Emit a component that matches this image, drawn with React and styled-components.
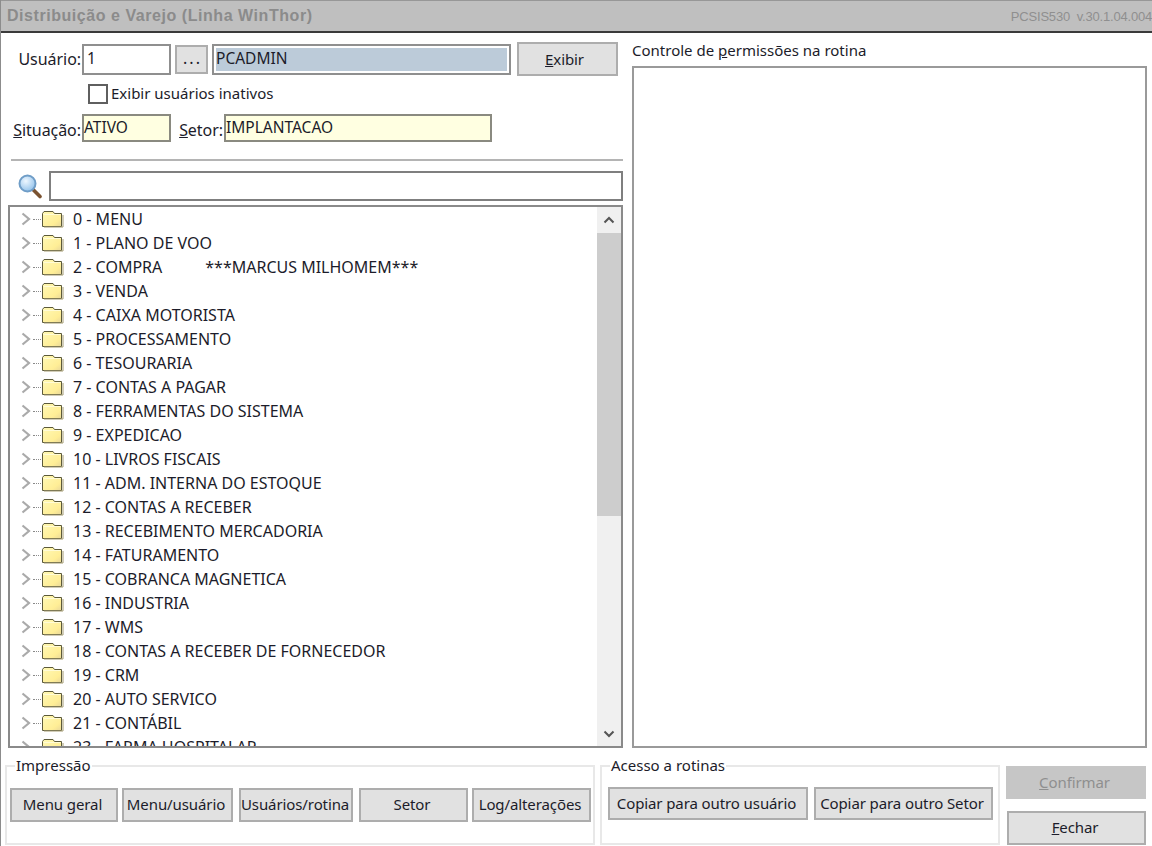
import React from "react";
import styled, { createGlobalStyle } from "styled-components";

const GlobalStyle = createGlobalStyle`
  html, body {
    margin: 0;
    padding: 0;
    background: #ffffff;
  }
  * {
    box-sizing: border-box;
  }
`;

const FONT = `"Noto Sans", "Liberation Sans", sans-serif`;
const INK = "#1c1c2a";

const Window = styled.div`
  width: 1152px;
  height: 846px;
  overflow: hidden;
  background: #ffffff;
  border-left: 1px solid #8c8c8c;
  font-family: ${FONT};
  font-size: 15px;
  color: ${INK};
  display: flex;
  flex-direction: column;
`;

const TitleBar = styled.header`
  height: 33px;
  flex: none;
  margin-left: -1px;
  padding: 0 0 0 7px;
  display: flex;
  align-items: center;
  justify-content: space-between;
  background: #bfbfbf;
  border-top: 1px solid #979797;
  border-bottom: 2px solid #3a3a3a;
  font-family: "Liberation Sans", Arial, sans-serif;
  white-space: nowrap;
`;

const AppName = styled.span`
  font-size: 16px;
  font-weight: bold;
  letter-spacing: 0.55px;
  color: #8b8b8b;
`;

const Version = styled.span`
  font-size: 13px;
  letter-spacing: -0.2px;
  color: #8f8f8f;
`;

const Body = styled.main`
  height: 715px;
  flex: none;
  padding-left: 7px;
  display: grid;
  grid-template-columns: 615px 515px;
  column-gap: 9px;
`;

const LeftColumn = styled.section`
  display: flex;
  flex-direction: column;
  min-height: 0;
`;

const RightColumn = styled.section`
  display: flex;
  flex-direction: column;
  min-height: 0;
`;

const FormRow = styled.div`
  display: flex;
  align-items: center;
  height: ${(p) => p.$h}px;
  margin-top: ${(p) => p.$top}px;
`;

const FieldLabel = styled.label`
  width: ${(p) => p.$w}px;
  flex: none;
  padding: ${(p) => p.$drop || 0}px 1px 0 0;
  font-size: 16px;
  text-align: right;
  white-space: nowrap;
  letter-spacing: -0.05px;
`;

const Field = styled.div`
  width: ${(p) => p.$w}px;
  height: ${(p) => p.$h}px;
  margin-left: ${(p) => p.$left || 0}px;
  flex: none;
  padding: 0 0 3px ${(p) => (p.$readonly ? 0 : 3)}px;
  display: flex;
  align-items: center;
  border: 2px solid;
  border-color: ${(p) => (p.$readonly ? "#8a8a80" : "#8f8f8f")};
  background: ${(p) => (p.$readonly ? "#ffffe1" : "#ffffff")};
  font-size: 15.5px;
  white-space: nowrap;
`;

const SelectedField = styled(Field)`
  padding: 2px;
`;

const Selection = styled.span`
  flex: 1;
  height: 100%;
  display: flex;
  align-items: center;
  padding-bottom: 3px;
  background: #bccbd9;
`;

const Button = styled.button`
  width: ${(p) => p.$w}px;
  height: ${(p) => p.$h || 34}px;
  margin-left: ${(p) => p.$left || 0}px;
  flex: none;
  padding: 0 3px 2px 0;
  font-family: ${FONT};
  font-size: 15px;
  letter-spacing: -0.1px;
  white-space: nowrap;
  color: ${(p) => (p.disabled ? "#8f8f8f" : INK)};
  background: ${(p) => (p.disabled ? "#c6c6c6" : "#e1e1e1")};
  border: 2px solid ${(p) => (p.disabled ? "#c6c6c6" : "#adadad")};
`;

const BrowseButton = styled(Button)`
  padding: 0 0 4px 2px;
  font-size: 16px;
  letter-spacing: 2px;
`;

const ShowButton = styled(Button)`
  padding: 0 6px 0 0;
`;

const CheckRow = styled(FormRow)`
  padding-left: 80px;
`;

const CheckBox = styled.span`
  width: 20px;
  height: 20px;
  flex: none;
  border: 2px solid #5f5f5f;
  background: #ffffff;
`;

const CheckLabel = styled.span`
  margin-left: 3px;
  padding-bottom: 2px;
`;

const Divider = styled.hr`
  height: 2px;
  margin: 17px 0 0 3px;
  border: 0;
  background: #b4b4b4;
`;

const SearchRow = styled.div`
  display: flex;
  align-items: center;
  height: 30px;
  margin-top: 10px;
  padding-left: 9px;
`;

const SearchInput = styled.div`
  flex: 1;
  height: 30px;
  margin-left: 6px;
  border: 2px solid #7f7f7f;
  background: #ffffff;
`;

const TreeBox = styled.div`
  flex: 1;
  min-height: 0;
  margin-top: 4px;
  display: flex;
  border: 2px solid #8a8a8a;
  background: #ffffff;
`;

const TreeList = styled.ul`
  flex: 1;
  min-width: 0;
  margin: 0;
  padding: 0;
  list-style: none;
  overflow: hidden;
`;

const TreeRow = styled.li`
  height: 24px;
  display: flex;
  align-items: center;
  padding-left: 11px;
  white-space: nowrap;
`;

const Connector = styled.span`
  width: 8px;
  height: 0;
  margin: 0 0 0 2px;
  border-top: 1px dotted #8a8a8a;
`;

const RowText = styled.span`
  margin-left: 9px;
  font-size: 16px;
`;

const NodeNote = styled.span`
  margin-left: 43px;
`;

const ScrollBar = styled.div`
  width: 24px;
  flex: none;
  display: flex;
  flex-direction: column;
  background: #f0f0f0;
`;

const ScrollArrow = styled.div`
  height: ${(p) => p.$h}px;
  flex: none;
  display: flex;
  align-items: center;
  justify-content: center;
`;

const ScrollThumb = styled.div`
  height: 283px;
  flex: none;
  background: #cdcdcd;
`;

const ScrollTrack = styled.div`
  flex: 1;
`;

const PermissionLabel = styled.label`
  height: 33px;
  flex: none;
  display: flex;
  align-items: center;
  white-space: nowrap;
`;

const PermissionBox = styled.div`
  flex: 1;
  border: 2px solid #9a9a9a;
  background: #ffffff;
`;

const Footer = styled.footer`
  flex: 1;
  display: flex;
  padding: 17px 0 0 4px;
`;

const Group = styled.fieldset`
  position: relative;
  width: ${(p) => p.$w}px;
  height: 80px;
  margin: 0 0 0 ${(p) => p.$left || 0}px;
  padding: ${(p) => p.$pad};
  flex: none;
  display: flex;
  align-items: flex-start;
  border: 2px solid #e8e8e8;
  min-width: 0;
`;

const GroupTitle = styled.span`
  position: absolute;
  top: -12px;
  left: ${(p) => p.$left}px;
  padding: 0 1px;
  background: #ffffff;
`;

const SideButtons = styled.div`
  margin-left: 6px;
  margin-top: 1px;
  display: flex;
  flex-direction: column;
  align-items: flex-end;
  width: 140px;
  row-gap: 12px;
`;

const Folder = () => (
  <svg width="23" height="18" viewBox="0 0 23 18">
    <defs>
      <linearGradient id="folderFill" x1="0" y1="0" x2="1" y2="1">
        <stop offset="0" stopColor="#fff9b5" />
        <stop offset="0.7" stopColor="#ffee96" />
        <stop offset="1" stopColor="#e8d79a" />
      </linearGradient>
    </defs>
    <path
      d="M1.5 16.5V3.5L3 1.5h9L13.5 3.5h7v13z"
      fill="url(#folderFill)"
      stroke="#5c5a3a"
      strokeWidth="1"
    />
    <path d="M2.5 4.5h17" stroke="#fffbd6" strokeWidth="1" />
    <path d="M22 5v12H3" fill="none" stroke="#a59c73" strokeWidth="1" />
  </svg>
);

const Expander = () => (
  <svg width="10" height="14" viewBox="0 0 10 14">
    <path d="M1.5 1.5 8 7l-6.5 5.5" fill="none" stroke="#aaaaaa" strokeWidth="2.2" />
  </svg>
);

const Magnifier = () => (
  <svg width="26" height="26" viewBox="0 0 26 26">
    <defs>
      <radialGradient id="lens" cx="0.4" cy="0.35" r="0.7">
        <stop offset="0" stopColor="#eef7ff" />
        <stop offset="1" stopColor="#8fc0ea" />
      </radialGradient>
    </defs>
    <path d="M15.5 16 23 23.5" stroke="#7a5230" strokeWidth="3.6" strokeLinecap="round" />
    <circle cx="10.5" cy="10.5" r="8" fill="url(#lens)" stroke="#6f9dc7" strokeWidth="2" />
  </svg>
);

const Chevron = ({ up }) => (
  <svg width="12" height="8" viewBox="0 0 12 8">
    <path
      d={up ? "M1.5 6.5 6 2l4.5 4.5" : "M1.5 1.5 6 6l4.5-4.5"}
      fill="none"
      stroke="#555555"
      strokeWidth="2"
    />
  </svg>
);

const menus = [
  "0 - MENU",
  "1 - PLANO DE VOO",
  "2 - COMPRA",
  "3 - VENDA",
  "4 - CAIXA MOTORISTA",
  "5 - PROCESSAMENTO",
  "6 - TESOURARIA",
  "7 - CONTAS A PAGAR",
  "8 - FERRAMENTAS DO SISTEMA",
  "9 - EXPEDICAO",
  "10 - LIVROS FISCAIS",
  "11 - ADM. INTERNA DO ESTOQUE",
  "12 - CONTAS A RECEBER",
  "13 - RECEBIMENTO MERCADORIA",
  "14 - FATURAMENTO",
  "15 - COBRANCA MAGNETICA",
  "16 - INDUSTRIA",
  "17 - WMS",
  "18 - CONTAS A RECEBER DE FORNECEDOR",
  "19 - CRM",
  "20 - AUTO SERVICO",
  "21 - CONTÁBIL",
  "23 - FARMA HOSPITALAR",
];

const App = () => {
  return (
    <>
      <GlobalStyle />
      <Window>
        <TitleBar>
          <AppName>Distribuição e Varejo (Linha WinThor)</AppName>
          <Version>PCSIS530&nbsp; v.30.1.04.004</Version>
        </TitleBar>

        <Body>
          <LeftColumn>
            <FormRow $h={34} $top={9}>
              <FieldLabel $w={74}>Usuário:</FieldLabel>
              <Field $w={89} $h={31}>1</Field>
              <BrowseButton $w={33} $h={29} $left={4}>...</BrowseButton>
              <SelectedField $w={299} $h={31} $left={4}>
                <Selection>PCADMIN</Selection>
              </SelectedField>
              <ShowButton $w={101} $left={6}>
                <u>E</u>xibir
              </ShowButton>
            </FormRow>

            <CheckRow $h={20} $top={8}>
              <CheckBox />
              <CheckLabel>Exibir usuários inativos</CheckLabel>
            </CheckRow>

            <FormRow $h={28} $top={10}>
              <FieldLabel $w={74} $drop={3}>
                <u>S</u>ituação:
              </FieldLabel>
              <Field $w={89} $h={28} $readonly>ATIVO</Field>
              <FieldLabel $w={53} $drop={3}>
                <u>S</u>etor:
              </FieldLabel>
              <Field $w={268} $h={28} $readonly>IMPLANTACAO</Field>
            </FormRow>

            <Divider />

            <SearchRow>
              <Magnifier />
              <SearchInput />
            </SearchRow>

            <TreeBox>
              <TreeList>
                {menus.map((menu) => (
                  <TreeRow key={menu}>
                    <Expander />
                    <Connector />
                    <Folder />
                    <RowText>
                      {menu}
                      {menu === "2 - COMPRA" && (
                        <NodeNote>***MARCUS MILHOMEM***</NodeNote>
                      )}
                    </RowText>
                  </TreeRow>
                ))}
              </TreeList>
              <ScrollBar>
                <ScrollArrow $h={26}>
                  <Chevron up />
                </ScrollArrow>
                <ScrollThumb />
                <ScrollTrack />
                <ScrollArrow $h={25}>
                  <Chevron />
                </ScrollArrow>
              </ScrollBar>
            </TreeBox>
          </LeftColumn>

          <RightColumn>
            <PermissionLabel>
              <span>
                Controle de <u>p</u>ermissões na rotina
              </span>
            </PermissionLabel>
            <PermissionBox />
          </RightColumn>
        </Body>

        <Footer>
          <Group $w={590} $pad="21px 0 0 3px">
            <GroupTitle $left={8}>Impressão</GroupTitle>
            <Button $w={108}>
              Menu <u>g</u>eral
            </Button>
            <Button $w={111} $left={4}>Menu/usuário</Button>
            <Button $w={114} $left={6}>Usuários/rotina</Button>
            <Button $w={109} $left={6}>Setor</Button>
            <Button $w={119} $left={4}>Log/alterações</Button>
          </Group>
          <Group $w={400} $left={5} $pad="20px 0 0 6px">
            <GroupTitle $left={8}>Acesso a rotinas</GroupTitle>
            <Button $w={200} $h={33}>Copiar para outro usuário</Button>
            <Button $w={179} $h={33} $left={6}>Copiar para outro Setor</Button>
          </Group>
          <SideButtons>
            <Button $w={140} $h={33} disabled>
              <u>C</u>onfirmar
            </Button>
            <Button $w={139}>
              <u>F</u>echar
            </Button>
          </SideButtons>
        </Footer>
      </Window>
    </>
  );
};

export default App;
